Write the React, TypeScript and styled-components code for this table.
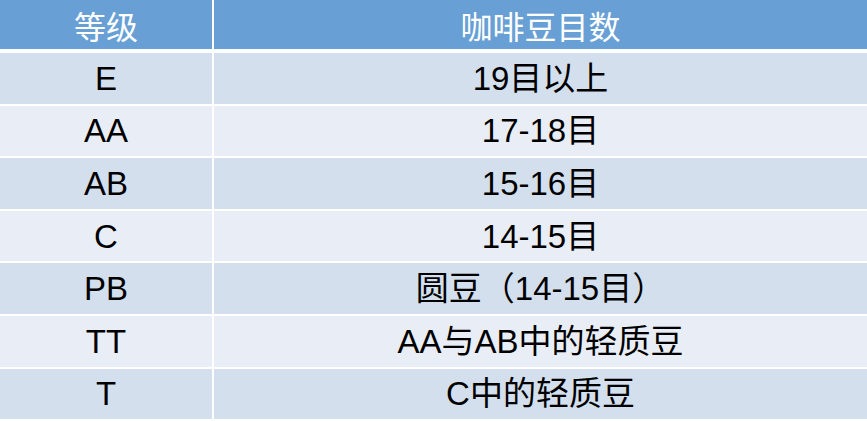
import styled, { createGlobalStyle } from "styled-components";

const GlobalStyle = createGlobalStyle`
  html, body {
    margin: 0;
    padding: 0;
    background: #ffffff;
  }
  body {
    font-family: "Liberation Sans", "Noto Sans CJK SC", sans-serif;
    overflow: hidden;
  }
`;

type Grade = { grade: string; mesh: string };

const grades: Grade[] = [
  { grade: "E", mesh: "19目以上" },
  { grade: "AA", mesh: "17-18目" },
  { grade: "AB", mesh: "15-16目" },
  { grade: "C", mesh: "14-15目" },
  { grade: "PB", mesh: "圆豆（14-15目）" },
  { grade: "TT", mesh: "AA与AB中的轻质豆" },
  { grade: "T", mesh: "C中的轻质豆" },
];

const Table = styled.div`
  width: 867px;
  display: flex;
  flex-direction: column;
  background: #ffffff;
`;

const Row = styled.div<{ $head?: boolean }>`
  display: grid;
  grid-template-columns: 212px 1fr;
  column-gap: 2px;
  height: ${({ $head }) => ($head ? "49px" : "50.6px")};
  margin-bottom: ${({ $head }) => ($head ? "4px" : "2px")};
  flex-shrink: 0;
`;

const Cell = styled.div<{ $head?: boolean; $shade?: "dark" | "light" }>`
  display: flex;
  align-items: center;
  justify-content: center;
  background: ${({ $head, $shade }) =>
    $head ? "#689fd4" : $shade === "dark" ? "#d3dfec" : "#e9eef6"};
  color: ${({ $head }) => ($head ? "#ffffff" : "#000000")};
  font-size: ${({ $head }) => ($head ? "32px" : "33px")};
  font-family: ${({ $head }) =>
    $head
      ? `"Noto Sans CJK SC", sans-serif`
      : `"Liberation Sans", "Noto Sans CJK SC", sans-serif`};
  white-space: nowrap;
  line-height: 1;
`;

export default function App() {
  return (
    <>
      <GlobalStyle />
      <Table>
        <Row $head>
          <Cell $head>等级</Cell>
          <Cell $head>咖啡豆目数</Cell>
        </Row>
        {grades.map((g, i) => {
          const shade = i % 2 === 0 ? "dark" : "light";
          return (
            <Row key={g.grade}>
              <Cell $shade={shade}>{g.grade}</Cell>
              <Cell $shade={shade}>{g.mesh}</Cell>
            </Row>
          );
        })}
      </Table>
    </>
  );
}
